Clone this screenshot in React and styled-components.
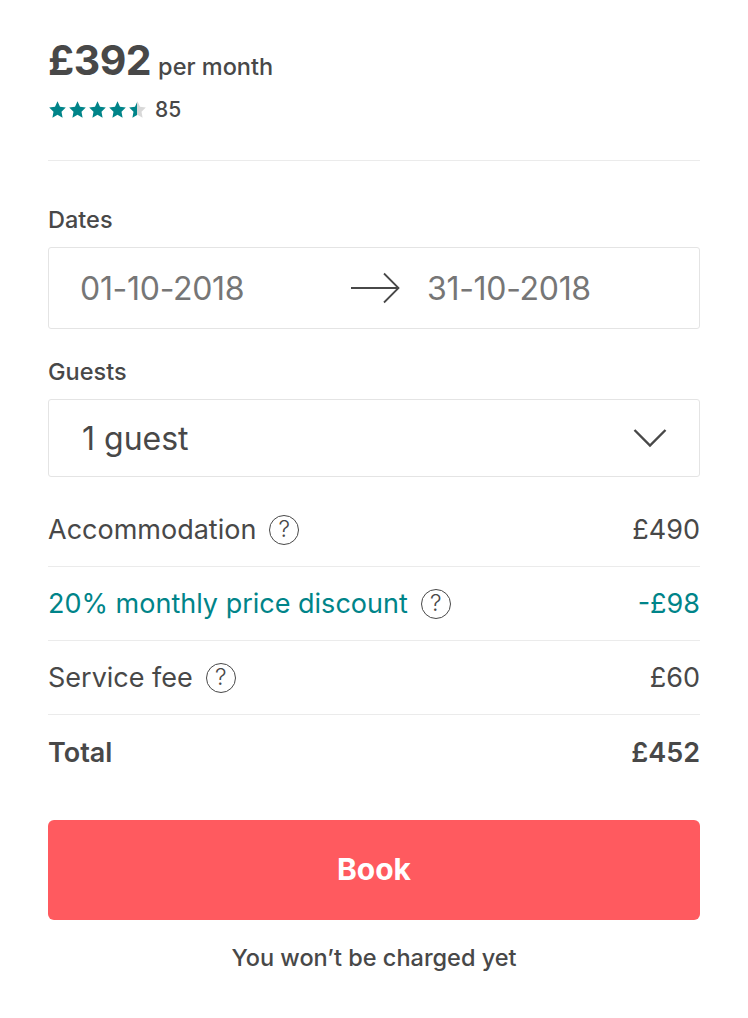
import React from "react";
import styled, { createGlobalStyle } from "styled-components";

const Global = createGlobalStyle`
  html, body { margin: 0; padding: 0; background: #fff; }
  body { font-family: "Inter", "Liberation Sans", sans-serif; color: #484848; -webkit-font-smoothing: antialiased; }
  * { box-sizing: border-box; }
`;

const Card = styled.div`
  width: 748px;
  padding: 34px 48px 0;
  display: flex;
  flex-direction: column;
`;

const PriceLine = styled.div`
  display: flex;
  align-items: baseline;
  gap: 7px;
  height: 52px;
`;

const Price = styled.span`
  font-size: 41px;
  font-weight: 700;
  letter-spacing: -0.5px;
  line-height: 52px;
`;

const PerMonth = styled.span`
  font-size: 23.5px;
  font-weight: 500;
`;

const RatingLine = styled.div`
  display: flex;
  align-items: center;
  gap: 8px;
  height: 26px;
  margin-top: 10px;
`;

const Stars = styled.div`
  display: flex;
  gap: 1px;
`;

const Count = styled.span`
  font-size: 21px;
  font-weight: 500;
`;

const Divider = styled.hr`
  border: none;
  border-top: 1px solid #ebebeb;
  margin: 0;
`;

const Section = styled.div`
  display: flex;
  flex-direction: column;
  padding-top: ${(p) => p.$top}px;
`;

const Label = styled.div`
  font-size: 23.5px;
  font-weight: 500;
  line-height: 26px;
  margin-bottom: 14px;
`;

const Box = styled.div`
  height: ${(p) => p.$h}px;
  border: 1px solid #e4e4e4;
  border-radius: 3px;
  display: flex;
  align-items: center;
  padding: 0 32px 0 31px;
`;

const DateField = styled.span`
  flex: ${(p) => (p.$first ? "0 0 270px" : "1")};
  font-size: 32px;
  font-weight: 400;
  color: #767676;
  letter-spacing: -0.3px;
`;

const ArrowWrap = styled.div`
  display: flex;
  margin-right: 27px;
`;

const GuestText = styled.span`
  flex: 1;
  font-size: 32px;
  color: #484848;
  padding-left: 2px;
`;

const Rows = styled.div`
  display: flex;
  flex-direction: column;
  margin-top: 16px;
`;

const Row = styled.div`
  height: 74px;
  display: flex;
  align-items: center;
  justify-content: space-between;
  border-bottom: ${(p) => (p.$last ? "none" : "1px solid #ebebeb")};
  color: ${(p) => (p.$accent ? "#008489" : "#484848")};
  font-size: 27px;
  font-weight: ${(p) => (p.$bold ? 600 : 400)};
`;

const RowLabel = styled.div`
  display: flex;
  align-items: center;
  gap: 13px;
`;

const Help = styled.span`
  width: 30px;
  height: 30px;
  border: 1.3px solid #484848;
  border-radius: 50%;
  display: inline-flex;
  align-items: center;
  justify-content: center;
  font-size: 23px;
  font-weight: 300;
  color: #484848;
  line-height: 1;
`;

const BookButton = styled.button`
  margin-top: 31px;
  height: 100px;
  border: none;
  border-radius: 6px;
  background: #ff5a5f;
  color: #fff;
  font-family: inherit;
  font-size: 30px;
  font-weight: 700;
  padding-bottom: 3px;
  cursor: pointer;
`;

const Note = styled.div`
  text-align: center;
  margin-top: 24px;
  font-size: 23.5px;
  font-weight: 500;
  line-height: 28px;
`;

const Star = ({ fill = "full" }) => {
  const id = "half-grad";
  const path = "M9.5 1.2l2.5 5.6 5.8.7-4.3 4.2 1.1 6-5.1-3-5.1 3 1.1-6L1.2 7.5l5.8-.7z";
  return (
    <svg width="19" height="19" viewBox="0 0 19 19">
      {fill === "half" && (
        <defs>
          <linearGradient id={id}>
            <stop offset="50%" stopColor="#008489" />
            <stop offset="50%" stopColor="#d8d8d8" />
          </linearGradient>
        </defs>
      )}
      <path d={path} fill={fill === "half" ? `url(#${id})` : "#008489"} />
    </svg>
  );
};

const Arrow = () => (
  <svg width="50" height="32" viewBox="0 0 50 32" fill="none" stroke="#484848" strokeWidth="1.8">
    <path d="M1 16h47M34 1.5 48.5 16 34 30.5" />
  </svg>
);

const Chevron = () => (
  <svg width="34" height="20" viewBox="0 0 34 20" fill="none" stroke="#484848" strokeWidth="2.4">
    <path d="M1.5 2 17 17.5 32.5 2" />
  </svg>
);

export default function App() {
  return (
    <>
      <Global />
      <Card>
        <PriceLine>
          <Price>£392</Price>
          <PerMonth>per month</PerMonth>
        </PriceLine>
        <RatingLine>
          <Stars>
            <Star />
            <Star />
            <Star />
            <Star />
            <Star fill="half" />
          </Stars>
          <Count>85</Count>
        </RatingLine>
        <Section $top={38}>
          <Divider />
        </Section>
        <Section $top={46}>
          <Label>Dates</Label>
          <Box $h={82}>
            <DateField $first>01-10-2018</DateField>
            <ArrowWrap>
              <Arrow />
            </ArrowWrap>
            <DateField>31-10-2018</DateField>
          </Box>
        </Section>
        <Section $top={30}>
          <Label>Guests</Label>
          <Box $h={78}>
            <GuestText>1 guest</GuestText>
            <Chevron />
          </Box>
        </Section>
        <Rows>
          <Row>
            <RowLabel>
              Accommodation <Help>?</Help>
            </RowLabel>
            <span>£490</span>
          </Row>
          <Row $accent>
            <RowLabel>
              20% monthly price discount <Help>?</Help>
            </RowLabel>
            <span>-£98</span>
          </Row>
          <Row>
            <RowLabel>
              Service fee <Help>?</Help>
            </RowLabel>
            <span>£60</span>
          </Row>
          <Row $last $bold>
            <RowLabel>Total</RowLabel>
            <span>£452</span>
          </Row>
        </Rows>
        <BookButton>Book</BookButton>
        <Note>You won’t be charged yet</Note>
      </Card>
    </>
  );
}
